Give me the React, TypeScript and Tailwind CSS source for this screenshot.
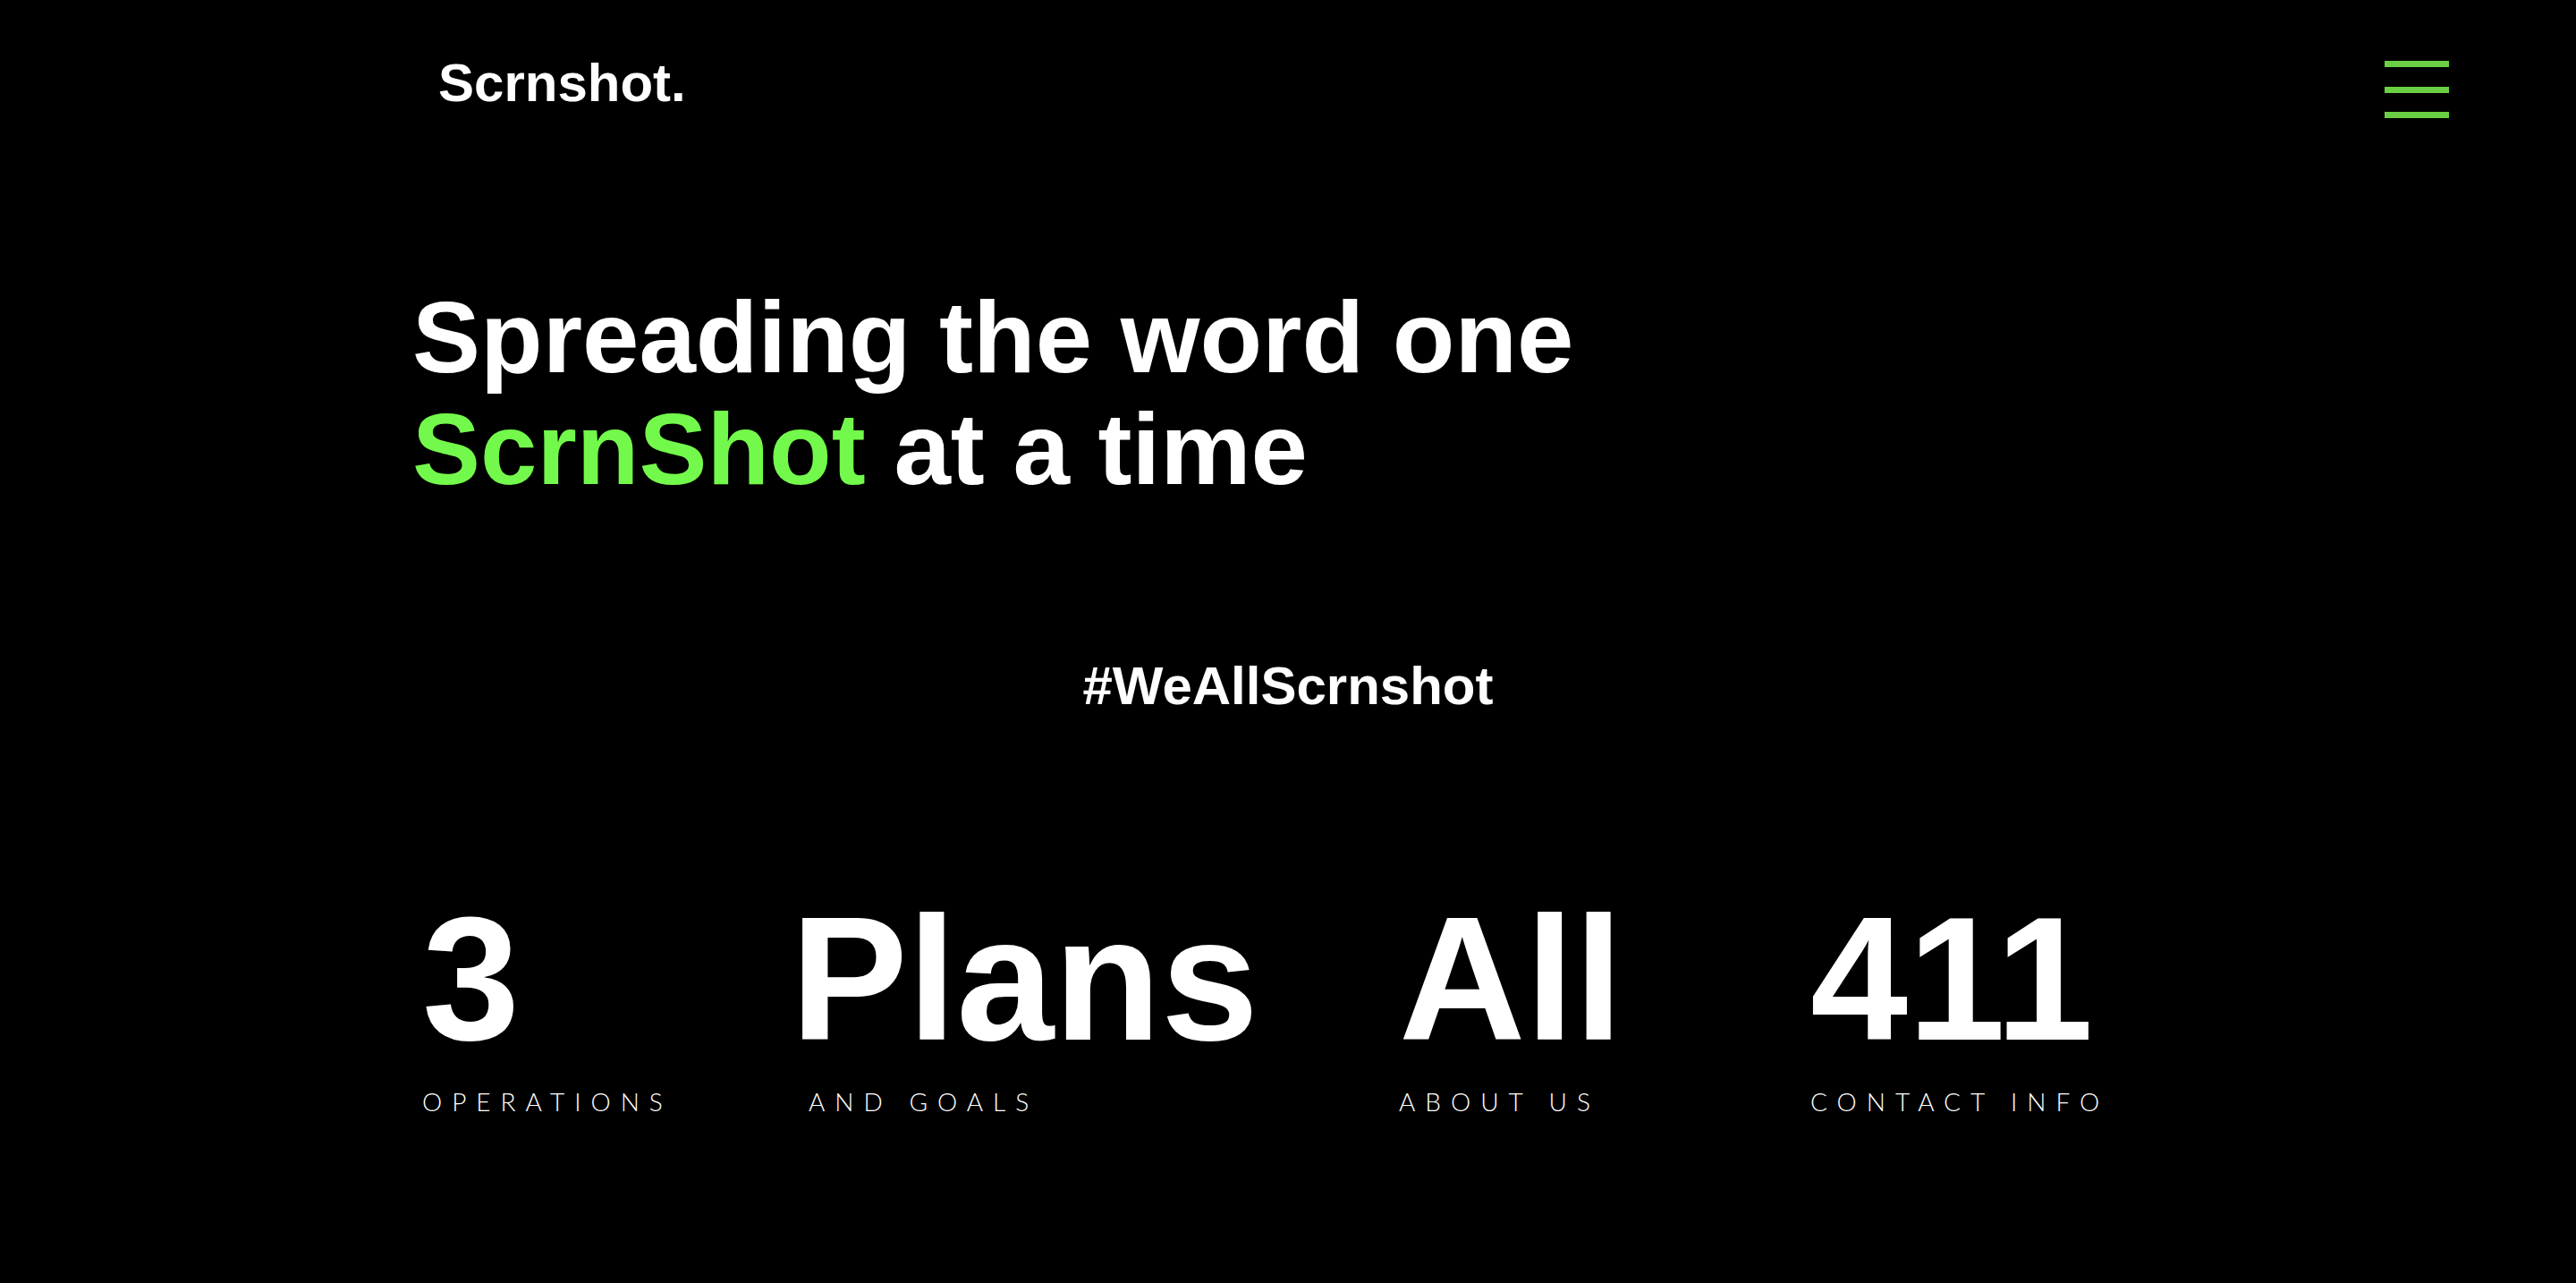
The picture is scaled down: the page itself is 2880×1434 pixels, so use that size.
const stats = [
  { value: "3", label: "OPERATIONS", href: "#operations", box: "w-[412px]", pad: "" },
  { value: "Plans", label: "AND GOALS", href: "#plans", box: "w-[680px]", pad: "pl-5" },
  { value: "All", label: "ABOUT US", href: "#about", box: "w-[460px]", pad: "" },
  { value: "411", label: "CONTACT INFO", href: "#contact", box: "w-[420px]", pad: "" },
];

export default function App() {
  return (
    <div className='min-h-screen bg-black font-["Liberation_Sans",Arial,sans-serif] font-bold text-white'>
      <header className="flex items-start justify-between pt-[63px] pr-[142px] pl-[490px]">
        <a href="#home" className="text-[60px] leading-[60px]">
          Scrnshot.
        </a>
        <button
          type="button"
          aria-label="Open menu"
          className="mt-[5px] flex h-16 w-[72px] cursor-pointer flex-col justify-between"
        >
          <span className="h-[7px] w-full bg-[#6bcf43]" />
          <span className="h-[7px] w-full bg-[#6bcf43]" />
          <span className="h-[7px] w-full bg-[#6bcf43]" />
        </button>
      </header>
      <main>
        <h1 className="mt-[182px] pl-[461px] text-[114px] leading-[125px]">
          Spreading the word one
          <br />
          <span className="text-[#73f94b]">ScrnShot</span> at a time
        </h1>
        <p className="mt-[173px] text-center text-[60px] leading-[60px]">#WeAllScrnshot</p>
        <nav aria-label="Sections" className="mt-[188px] flex pl-[472px]">
          {stats.map((s) => (
            <a key={s.label} href={s.href} className={s.box}>
              <span className="block text-[196px] leading-[220px]">{s.value}</span>
              <span
                className={
                  'mt-1.5 block font-["Lato",sans-serif] text-[28px] leading-[40px] font-light tracking-[11px] whitespace-nowrap ' +
                  s.pad
                }
              >
                {s.label}
              </span>
            </a>
          ))}
        </nav>
      </main>
    </div>
  );
}
